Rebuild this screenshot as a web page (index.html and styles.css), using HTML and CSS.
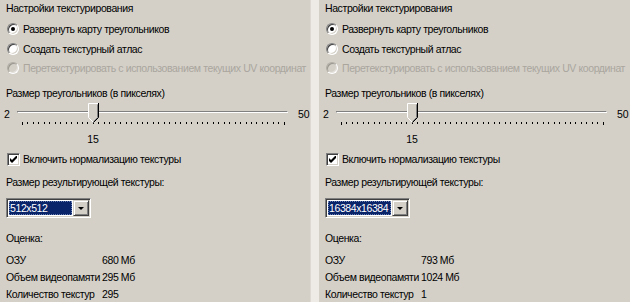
FILE: index.html
```html
<!DOCTYPE html>
<html lang="ru">
<head>
  <meta charset="UTF-8">
  <title>Настройки текстурирования</title>
  <link rel="stylesheet" href="styles.css">
</head>
<body>
  <div class="dialog">
    <!-- left: 512x512 -->
    <section class="panel">
      <div class="caption title">Настройки текстурирования</div>
      <label class="option checked"><span class="radio"></span>Развернуть карту треугольников</label>
      <label class="option"><span class="radio"></span>Создать текстурный атлас</label>
      <label class="option disabled"><span class="radio"></span>Перетекстурировать с использованием текущих UV координат</label>

      <div class="caption size-caption">Размер треугольников (в пикселях)</div>
      <div class="slider">
        <span class="slider-min">2</span>
        <div class="slider-body">
          <div class="channel"></div>
          <div class="thumb" style="left: 71px">
            <svg width="11" height="20" viewBox="0 0 11 20">
              <path d="M0.5 0.5H10.5V14.5L5.5 19.5L0.5 14.5Z" fill="#d4d0c8"/>
              <path d="M5.5 19.5L0.5 14.5V0.5H10" fill="none" stroke="#fff"/>
              <path d="M10.5 0V14.5L5.5 19.5" fill="none" stroke="#000"/>
              <path d="M9.5 1.5V14.5L5.5 18.5" fill="none" stroke="#808080"/>
            </svg>
          </div>
          <div class="ticks">
            <i class="long"></i><i></i><i></i><i></i><i></i><i></i><i></i><i></i><i></i><i></i>
            <i></i><i></i><i></i><i></i><i></i><i></i><i></i><i></i><i></i><i></i>
            <i></i><i></i><i></i><i></i><i></i><i></i><i></i><i></i><i></i><i></i>
            <i></i><i></i><i></i><i></i><i></i><i></i><i></i><i></i><i></i><i></i>
            <i></i><i></i><i></i><i></i><i></i><i></i><i></i><i></i><i class="long"></i>
          </div>
          <div class="slider-value" style="margin-left: 66px">15</div>
        </div>
        <span class="slider-max">50</span>
      </div>

      <label class="option check-row"><span class="checkbox"><svg width="7" height="7" viewBox="0 0 7 7"><path d="M0 2L2 4L7 -1V2L2 7L0 5Z" fill="#000"/></svg></span>Включить нормализацию текстуры</label>

      <div class="caption result-caption">Размер результирующей текстуры:</div>
      <div class="combo">
        <span class="combo-text"><span class="combo-sel">512x512</span></span>
        <span class="combo-btn"><span class="arrow"></span></span>
      </div>

      <div class="caption estimate">Оценка:</div>
      <div class="stats">
        <span>ОЗУ</span><span>680 Мб</span>
        <span>Объем видеопамяти</span><span>295 Мб</span>
        <span>Количество текстур</span><span>295</span>
      </div>
    </section>

    <div class="splitter"></div>

    <!-- right: 16384x16384 -->
    <section class="panel">
      <div class="caption title">Настройки текстурирования</div>
      <label class="option checked"><span class="radio"></span>Развернуть карту треугольников</label>
      <label class="option"><span class="radio"></span>Создать текстурный атлас</label>
      <label class="option disabled"><span class="radio"></span>Перетекстурировать с использованием текущих UV координат</label>

      <div class="caption size-caption">Размер треугольников (в пикселях)</div>
      <div class="slider">
        <span class="slider-min">2</span>
        <div class="slider-body">
          <div class="channel"></div>
          <div class="thumb" style="left: 71px">
            <svg width="11" height="20" viewBox="0 0 11 20">
              <path d="M0.5 0.5H10.5V14.5L5.5 19.5L0.5 14.5Z" fill="#d4d0c8"/>
              <path d="M5.5 19.5L0.5 14.5V0.5H10" fill="none" stroke="#fff"/>
              <path d="M10.5 0V14.5L5.5 19.5" fill="none" stroke="#000"/>
              <path d="M9.5 1.5V14.5L5.5 18.5" fill="none" stroke="#808080"/>
            </svg>
          </div>
          <div class="ticks">
            <i class="long"></i><i></i><i></i><i></i><i></i><i></i><i></i><i></i><i></i><i></i>
            <i></i><i></i><i></i><i></i><i></i><i></i><i></i><i></i><i></i><i></i>
            <i></i><i></i><i></i><i></i><i></i><i></i><i></i><i></i><i></i><i></i>
            <i></i><i></i><i></i><i></i><i></i><i></i><i></i><i></i><i></i><i></i>
            <i></i><i></i><i></i><i></i><i></i><i></i><i></i><i></i><i class="long"></i>
          </div>
          <div class="slider-value" style="margin-left: 66px">15</div>
        </div>
        <span class="slider-max">50</span>
      </div>

      <label class="option check-row"><span class="checkbox"><svg width="7" height="7" viewBox="0 0 7 7"><path d="M0 2L2 4L7 -1V2L2 7L0 5Z" fill="#000"/></svg></span>Включить нормализацию текстуры</label>

      <div class="caption result-caption">Размер результирующей текстуры:</div>
      <div class="combo">
        <span class="combo-text"><span class="combo-sel">16384x16384</span></span>
        <span class="combo-btn"><span class="arrow"></span></span>
      </div>

      <div class="caption estimate">Оценка:</div>
      <div class="stats">
        <span>ОЗУ</span><span>793 Мб</span>
        <span>Объем видеопамяти</span><span>1024 Мб</span>
        <span>Количество текстур</span><span>1</span>
      </div>
    </section>
  </div>
</body>
</html>
```

FILE: styles.css
```css
body {
  margin: 0;
  background-color: #d4d0c8;
  font-family: 'Liberation Sans', Arial, sans-serif;
  font-size: 10.5px;
  letter-spacing: -0.4px;
  color: #000;
}
.dialog {
  display: flex;
  height: 302px;
  overflow: hidden;
}
.panel {
  display: flex;
  flex-direction: column;
  align-items: flex-start;
  width: 298px;
  padding: 0 6px;
  white-space: nowrap;
}
.panel:last-child {
  width: 299px;
}
.splitter {
  width: 8px;
  background-color: #eeebe6;
  border-left: 1px solid #dedad3;
}
.caption {
  height: 16px;
  line-height: 16px;
}
.option {
  display: flex;
  align-items: center;
  height: 20px;
}
.title {
  margin-bottom: 3px;
}
.size-caption {
  margin-top: 7px;
}

/* radio buttons, classic look */
.radio {
  position: relative;
  box-sizing: border-box;
  width: 12px;
  height: 12px;
  margin: 0 4px 0 1px;
  border-radius: 50%;
  border: 1px solid;
  border-color: #808080 #fff #fff #808080;
  box-shadow: inset 1px 1px #404040, inset -1px -1px #d4d0c8;
  background-color: #fff;
}
.checked .radio::after {
  content: "";
  position: absolute;
  left: 3px;
  top: 3px;
  width: 4px;
  height: 4px;
  border-radius: 50%;
  background-color: #000;
}
.disabled {
  color: #aaa69e;
}
.disabled .radio {
  background-color: #d4d0c8;
  border-color: #b0ada6 #fff #fff #b0ada6;
  box-shadow: inset 1px 1px #9a978f, inset -1px -1px #e4e1dc;
}

/* trackbar */
.slider {
  display: flex;
  margin-left: -2px;
  height: 46px;
  letter-spacing: 0;
}
.slider-min {
  width: 13px;
  padding-top: 7px;
}
.slider-max {
  padding: 7px 0 0 10px;
}
.slider-body {
  position: relative;
  display: flex;
  flex-direction: column;
  width: 271px;
}
.channel {
  box-sizing: border-box;
  height: 4px;
  margin-top: 10px;
  border: 1px solid;
  border-color: #808080 #fff #fff #808080;
  box-shadow: inset 1px 1px #404040;
}
.thumb {
  position: absolute;
  top: 2px;
  height: 20px;
}
.thumb svg {
  display: block;
}
.ticks {
  display: flex;
  justify-content: space-between;
  align-items: flex-start;
  margin: 9px 3px 0 5px;
}
.ticks i {
  width: 1px;
  height: 2px;
  background-color: #000;
}
.ticks i.long {
  height: 3px;
}
.slider-value {
  width: 20px;
  margin-top: 6px;
  text-align: center;
  line-height: 16px;
}

/* checkbox */
.check-row {
  height: 18px;
  margin-top: 3px;
}
.checkbox {
  display: flex;
  align-items: center;
  justify-content: center;
  box-sizing: border-box;
  width: 13px;
  height: 13px;
  margin: 0 3px 0 1px;
  border: 1px solid;
  border-color: #808080 #fff #fff #808080;
  box-shadow: inset 1px 1px #404040, inset -1px -1px #d4d0c8;
  background-color: #fff;
}
.checkbox svg {
  display: block;
}
.result-caption {
  margin-top: 6px;
}

/* combo box */
.combo {
  display: flex;
  box-sizing: border-box;
  width: 85px;
  height: 20px;
  margin-top: 8px;
  border: 1px solid;
  border-color: #808080 #fff #fff #808080;
  box-shadow: inset 1px 1px #404040, inset -1px -1px #d4d0c8;
  background-color: #fff;
  padding: 2px;
}
.combo-text {
  flex: 1;
  display: flex;
  padding-right: 1px;
}
.combo-sel {
  flex: 1;
  padding-left: 1px;
  line-height: 14px;
  background-color: #0a246a;
  color: #fff;
  outline: 1px dotted #6b7fb0;
  outline-offset: -1px;
}
.combo-btn {
  display: flex;
  align-items: center;
  justify-content: center;
  box-sizing: border-box;
  width: 16px;
  margin: -1px -1px -1px 0;
  border: 1px solid;
  border-color: #d4d0c8 #404040 #404040 #d4d0c8;
  box-shadow: inset 1px 1px #fff, inset -1px -1px #808080;
  background-color: #d4d0c8;
}
.arrow {
  width: 0;
  height: 0;
  border-left: 3px solid transparent;
  border-right: 3px solid transparent;
  border-top: 3px solid #000;
}

/* estimate */
.estimate {
  margin-top: 12px;
}
.stats {
  display: grid;
  grid-template-columns: 96px auto;
  grid-auto-rows: 17px;
  align-items: center;
  margin-top: 5px;
}
```
